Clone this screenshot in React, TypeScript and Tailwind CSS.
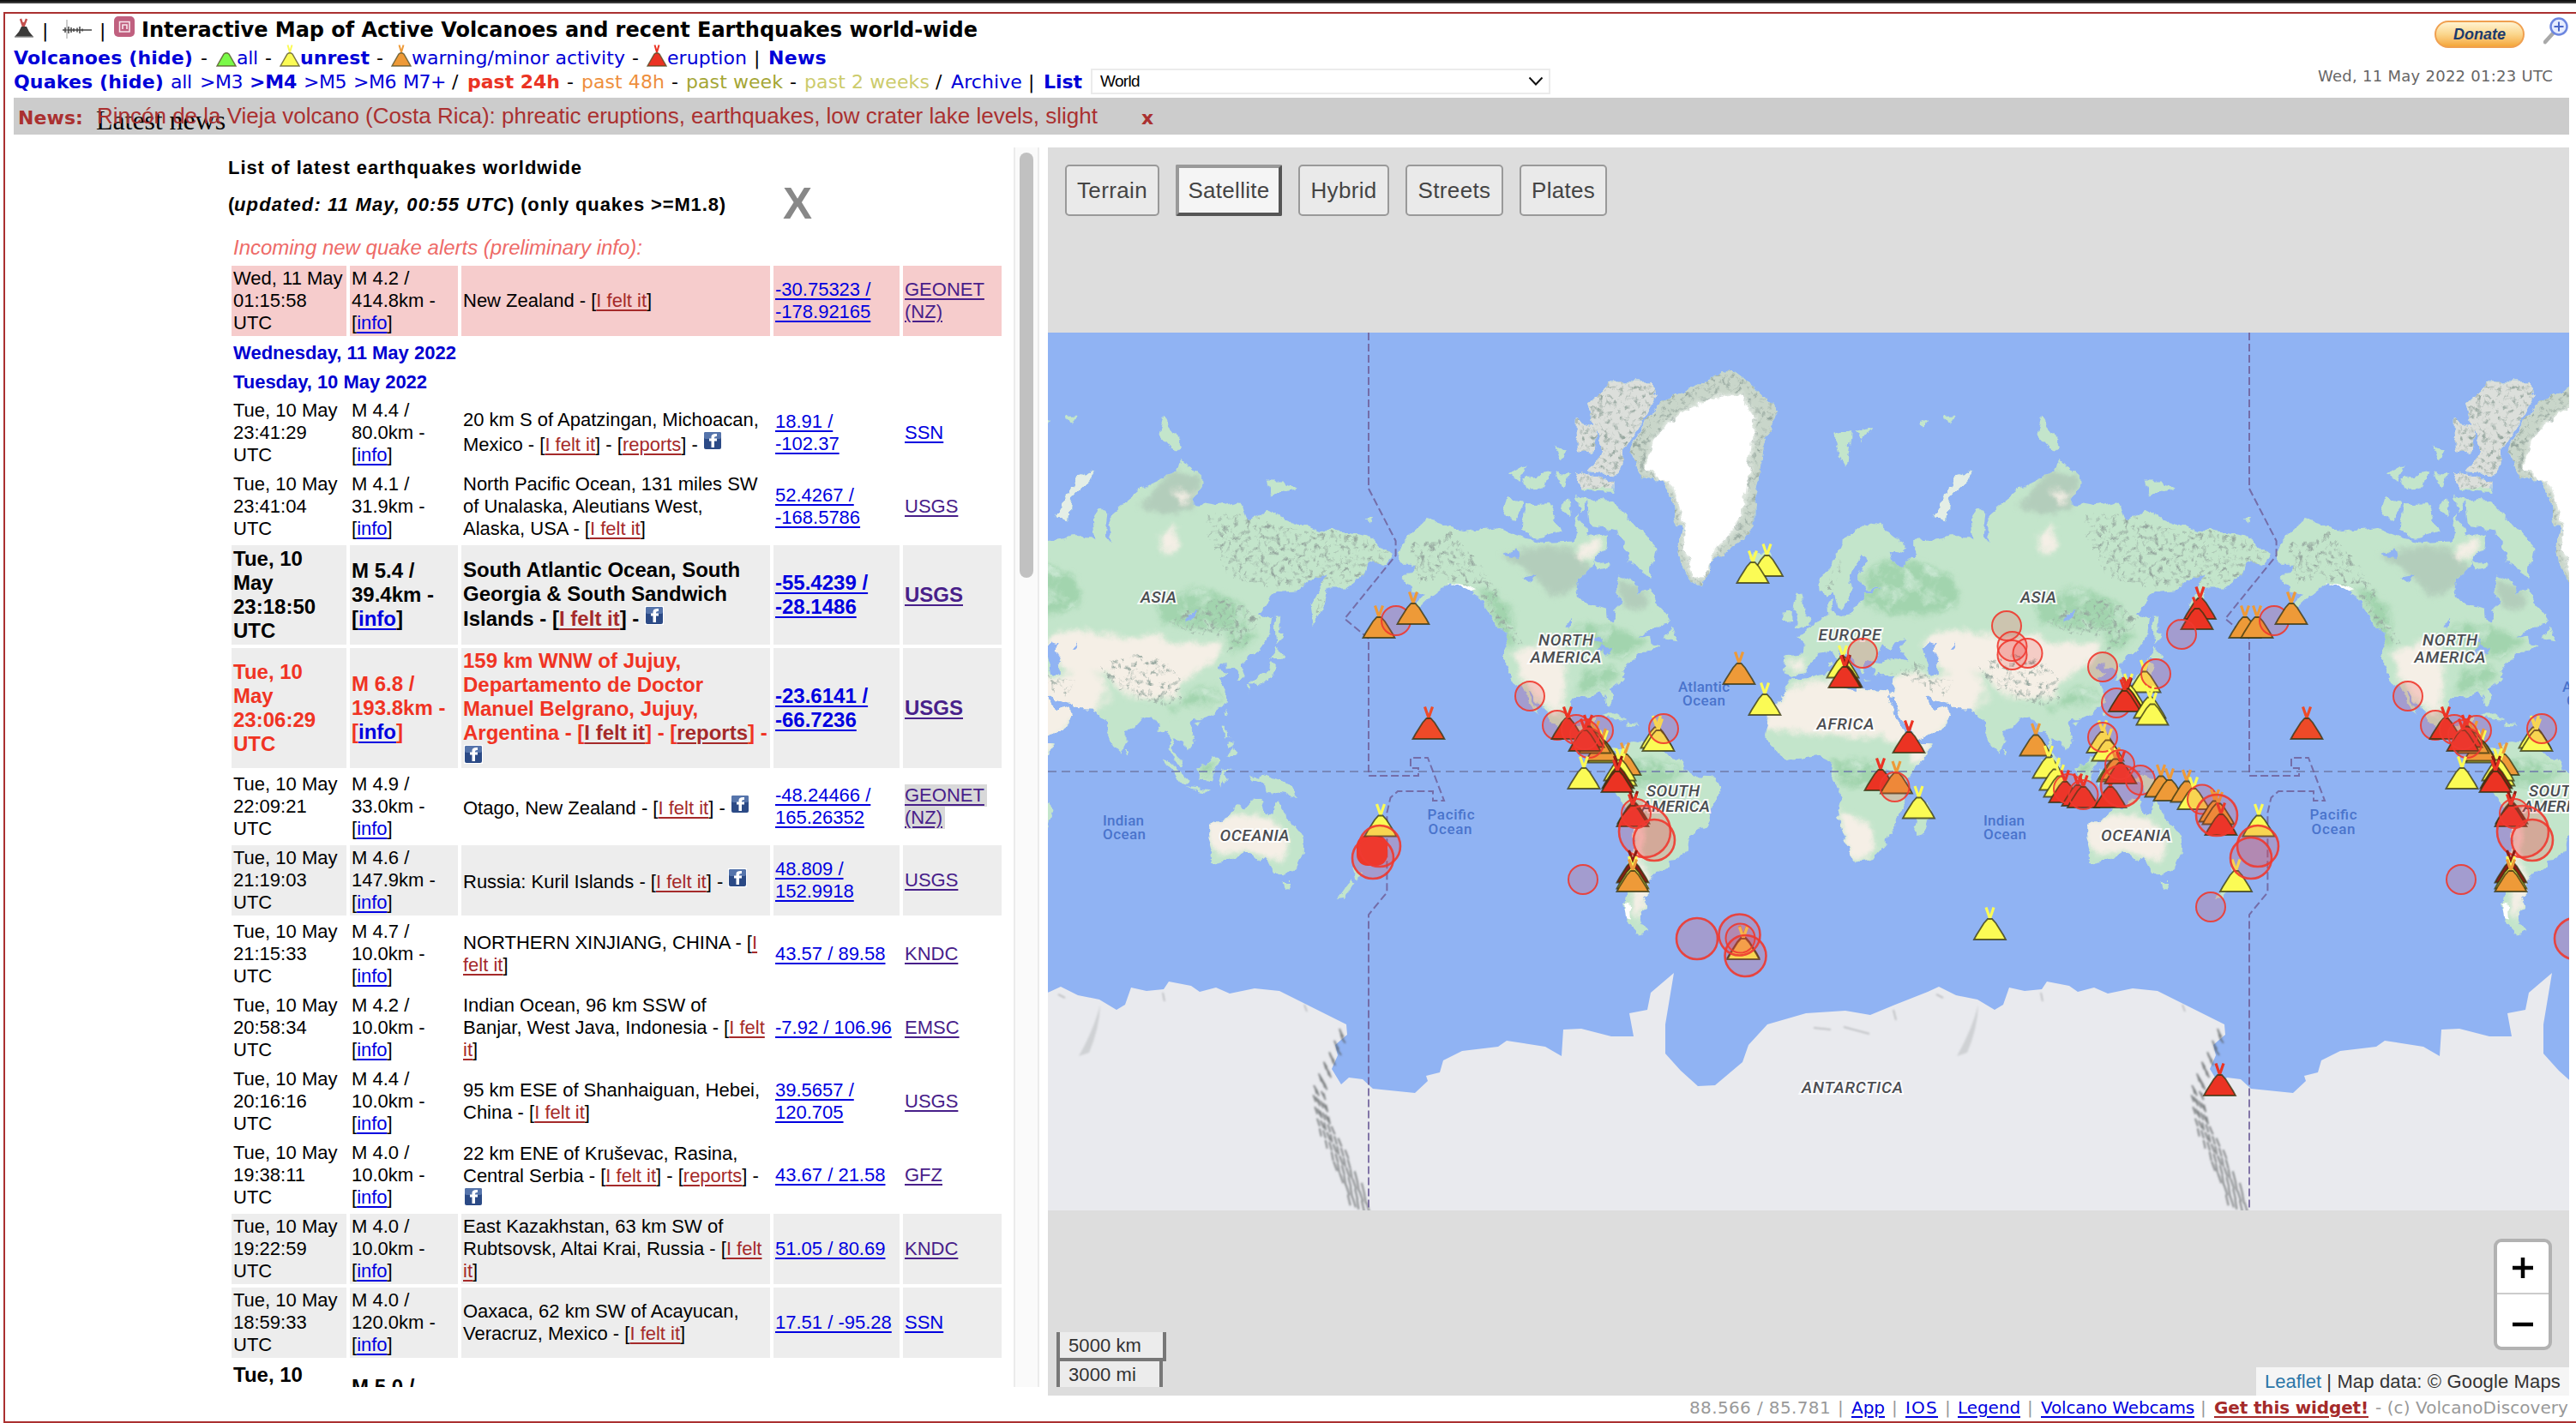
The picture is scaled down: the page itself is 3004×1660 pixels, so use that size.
import React, { useLayoutEffect, useRef, useState } from "react";

/* ---------- text helper: tracks a run of text out to a given width ---------- */

function Fit({ w, className = "", children }: { w: number; className?: string; children: string }) {
  const ref = useRef<HTMLSpanElement>(null);
  const [ls, setLs] = useState(0);
  useLayoutEffect(() => {
    if (ref.current) {
      const natural = ref.current.getBoundingClientRect().width;
      setLs((w - natural) / children.length);
    }
  }, []);
  return (
    <span ref={ref} className={"inline-block shrink-0 whitespace-pre " + className} style={{ letterSpacing: ls + "px" }}>
      {children}
    </span>
  );
}

/* ---------- icons ---------- */

function VolcanoIcon({ fill, plume, className = "" }: { fill: string; plume?: string; className?: string }) {
  return (
    <svg viewBox="0 0 24 26" className={"h-[26px] w-6 shrink-0 " + className}>
      {plume && <path d="M9.5 0.5L12 9M14.5 0.5L12 9" stroke={plume} strokeWidth="2" fill="none" />}
      <path d="M1 25L9 11Q12 8.5 15 11L23 25Z" fill={fill} stroke="#4d4a20" strokeOpacity=".75" strokeWidth="1.5" />
    </svg>
  );
}

function DarkVolcano() {
  return (
    <svg viewBox="0 0 24 24" className="h-6 w-6 shrink-0">
      <path d="M8 1l3 9M15 1l-3.500 9M11 5v6" stroke="#c4504e" strokeWidth="2.400" fill="none" />
      <path d="M1 22l5-6 3-6h6l3 6 5 6z" fill="#3b3a39" />
      <path d="M1 22h22" stroke="#8a8a8a" strokeWidth="1.500" />
    </svg>
  );
}

function Seismo() {
  return (
    <svg viewBox="0 0 34 26" className="h-[26px] w-[34px] shrink-0">
      <path d="M0 13h34" stroke="#444" strokeWidth="1.600" />
      <path d="M5 1v22" stroke="#999" strokeWidth="1" />
      <path d="M3 10v6M7 9v8M10 10v6M13 11v4M17 10.500v5M20 9v8M23 11.500v3" stroke="#444" strokeWidth="1.500" />
    </svg>
  );
}

function PinkBox() {
  return (
    <svg viewBox="0 0 24 24" className="h-6 w-6 shrink-0">
      <rect width="24" height="24" rx="5" fill="#c0607f" />
      <path d="M6.500 6.500h11.500v11.500h-11.500z" fill="none" stroke="#f8e8ee" strokeWidth="1.500" />
      <path d="M10 15v-5h5v5" fill="none" stroke="#f8e8ee" strokeWidth="1.600" />
    </svg>
  );
}

function Facebook() {
  return (
    <svg viewBox="0 0 22 22" className="inline-block h-[22px] w-[22px] align-[1px]">
      <rect width="22" height="22" fill="#fff" />
      <rect x="1" y="1" width="20" height="20" rx="2" fill="#2b4a86" />
      <rect x="1" y="1" width="20" height="8" rx="2" fill="#5574ab" />
      <path d="M9.500 19v-7.500h-2.500v-3h2.500v-2q0-4 6.500-3.500v3q-3-.3-3 1.500v1h3v3h-3V19z" fill="#fff" />
    </svg>
  );
}

function Magnifier() {
  return (
    <svg viewBox="0 0 30 32" className="h-8 w-[30px] shrink-0">
      <path d="M11 19L2 29" stroke="#a9a9a9" strokeWidth="4.500" strokeLinecap="round" />
      <circle cx="18" cy="11" r="9.500" fill="#e6ecff" stroke="#6c86e0" strokeWidth="2.500" />
      <path d="M18 5.500v11M12.500 11h11" stroke="#4b66c8" strokeWidth="2" />
    </svg>
  );
}

/* ---------- world geometry (lon,lat rings) ---------- */

const LAND: string[] = [
  // Eurasia
  "-9,37 -9.5,39 -9,43 -2,43.5 -1.2,46 -4.5,48.3 -1.5,49 2,51 5,53 8.5,54 8,57 10.5,57.5 10,55 11,54 14,54 19,54.5 21,57 24,57.5 23.5,59 30,60 24,60 21.5,61 21.5,63 25,65 22,66 17.5,62.5 17,60.5 19,60 16.5,57 14,55.5 12.5,56 11,59 8,58 5.5,59 5,62 10,64 14,68 20,70 26,71 31,70.3 41,67.5 40,66.2 34,66.7 35,64.5 38,64 40,65 44,66 44,68.3 53,68.5 59,69 66,69 68,68.5 67,71 70,73 73,72.5 72,69 74,68 74,72 80,73.5 87,75 98,76.3 104,77.7 113,75.8 108,73.5 118,73 127,73.5 130,71 139,72.5 150,71 160,69.8 170,69.5 180,69 187,67 190,66 187,64.3 180,65 178,62.5 171,60 163,60 162,56 157,51.2 156,56 160,60 163,62.5 156,61.5 151,59.3 142,59 135,54.5 141,53 140,48.5 135,44 131,42.7 127.5,39.5 129.3,36 126.5,34.5 126.5,37.5 125,39.5 121.5,39 121.5,40.8 118,39 122.5,37.3 119.3,35 121.9,31.5 121.5,28 118,24.5 114,22.3 110,20.5 108.5,21.7 106,20 107,17 109.2,12.5 106.5,9 105,9 104.5,10.5 102.5,12 101,13.5 100,13.3 99.3,9.5 100.5,7 103.3,4.5 104,1.3 103,1.5 100.5,5 98.3,8.5 98.5,13 97.5,16.5 94.5,16 94,19 91.5,22.5 87,21.5 82.5,16.8 80,15.5 80,12 78,8.2 76.3,10 73,16 72.7,21 70,20.8 69,22.5 67,25 61,25.2 57,26.8 51.5,27.8 50,30 48,29.8 50.3,26.5 51.5,25.5 52,24 56,26 59.8,22.5 55,17.5 52,15.7 45,12.8 43.3,12.7 42.8,16.5 39,21.3 35,28 35,29.5 32.5,29.9 34.3,31.3 36,36.7 30.5,36.5 27.5,37 26.5,39.5 29,41 35,42 41.3,41.4 38,44.5 39.5,47.2 35,46.3 33.5,44.5 31,46.5 28.7,44 28,41.3 24,40.7 22.7,39 23.7,38 22.7,36.7 20,39.7 19.3,42 13.7,45 12.5,45.4 14,42.5 18.4,40 16.5,39.8 17,38.8 16,38 15.7,40 12,42 10.3,43.8 7,43.7 4,43.4 3,41.8 0,39.5 -1,37.5 -4.5,36.7 -6,36.3",
  // Africa
  "-6,35.8 -2,35.1 5,36.8 10.5,37.3 11,34 15,32.3 20,31 20,32.8 25,31.7 32,31.2 32.5,29.8 34,27 37,21 39.5,15.5 43,11.8 51,11.9 48,5 42,-1.5 39.3,-6 40.7,-14.5 35,-20 35.5,-24 32.8,-26 32.5,-28.5 28,-33 20,-34.8 18.3,-33 15,-26.5 12,-18 13.7,-11 12,-5.5 9,-1 9.7,3.8 4.5,6.3 -4,5.2 -8,4.4 -13.3,8.8 -16.8,12.5 -17.2,15 -16.2,19 -17,21 -13,27.5 -9.8,30 -9,33",
  "49.3,-12 50.4,-15.7 47.5,-24.8 45,-25.5 43.5,-22 44.5,-16.5",
  // North America
  "-168,65.7 -166,68.3 -156.5,71.3 -141,69.7 -128,70.2 -115,68.5 -108,68 -96,68.2 -94,72 -90,69 -82,69.5 -82,67 -87,66 -87,64.5 -94,61.5 -94.5,58.8 -92.5,57 -82.3,55.2 -82,52.9 -79.5,51.5 -79,54.5 -76.8,57 -78,60 -77.5,62.5 -71,61.2 -69,58.8 -65,60.2 -62,57.5 -57,53 -60,50.2 -66,50 -69,48 -65,48.5 -64.5,46.5 -60,46 -66,43.7 -70,43.5 -70.2,41.8 -74,40.5 -76,37 -75.7,35.3 -81.2,31.5 -80,26.5 -81,25.3 -83,29 -85.5,30 -90,29.3 -94,29.6 -97.3,27.5 -97.8,22.5 -95.5,18.7 -91.5,18.5 -90.3,21 -87,21.4 -88.5,16 -83.3,15 -83.5,11 -81.5,9 -79.5,9.4 -77.3,8.3 -78.3,8.3 -80,7.3 -83,8.3 -86,11.5 -91.5,14 -94.5,16.2 -96.5,15.7 -105.5,20 -105.5,22.5 -109.5,26 -113,31 -114.7,31.5 -111.5,26.5 -109.5,23 -112,25 -115,28.5 -117.2,32.6 -120.7,34.6 -124,40 -124.3,47 -123,49 -128,51.5 -131,55 -135,58.3 -140,59.8 -147,61 -151.5,59.3 -153.5,58.5 -158.5,56 -164.5,54.7 -158,58.5 -162,58.8 -162,60 -166,61.5 -161,64.5 -166,64.5",
  // South America
  "-77.3,8.3 -75.5,10.7 -71.7,12.2 -68,11.2 -62,10.7 -57,6 -51,4.2 -50,0.5 -44,-2.6 -39,-3 -35.2,-5.5 -35,-8.5 -39,-13.5 -39.5,-18.5 -41,-22 -44.5,-23.2 -48.5,-26 -49,-28.8 -53.5,-34 -57.5,-34.3 -57,-36.5 -62,-39 -65,-41 -65.5,-45 -67.5,-46.3 -66,-48 -69,-51 -68.3,-52.5 -65.5,-54.8 -69,-55.5 -74,-52.5 -75.5,-48 -73.5,-42 -73.5,-37 -71.5,-31 -70.3,-20 -71,-17.7 -76,-14 -79,-8 -81.3,-5.5 -80,-3 -80.8,-1 -78.5,2 -77.3,4",
  // Greenland
  "-73,78.3 -68,80.2 -60,82 -45,82.8 -32,83.6 -20,82.5 -12,81.5 -18,79 -19.5,76 -22,73 -22,70.5 -27,68.5 -34,66.3 -40,65 -43,60.2 -48.5,61.3 -52,64.5 -53.5,67.5 -51,69.5 -54.5,71 -56,74 -60,76 -68,76",
  // Arctic Canada
  "-90,73.7 -80,73.7 -72,71 -62,66.8 -65,62 -68,63 -73,64.5 -74,66.5 -78,70 -89,70.5",
  "-117,71 -115,73.2 -106,73.3 -101,69.5 -110,68.6 -117,69.8",
  "-125,72 -123,74.3 -116,73.2 -120,71.3",
  "-90,76.5 -84,78.5 -88,80.5 -90,81.8 -80,83 -65,83 -62,82.2 -68,80.5 -75,78.5 -78,76.3",
  "-95,80.8 -87,80.3 -88,78.3 -95,78.5",
  "-96,76.6 -80,75.8 -80,74.6 -92,74.8",
  "-117,76 -106,76.5 -108,75 -115,74.9",
  "-102,73 -98,74 -97,71.5",
  "-95,74 -90,73.7 -93,72.2",
  "-104,79 -99,78.5 -101,77.8",
  "-104,76.5 -98,76.5 -100,75",
  "-122,76.5 -116,77.3 -118,75.8",
  "-87,65.5 -81,64 -86,63.3",
  // North Atlantic and Europe
  "-59,47.7 -56,51.5 -53,47",
  "-24,65.5 -22,66.3 -16,66.5 -13.7,65 -18,63.4 -22.5,64",
  "-5.5,50 1.3,51.2 -1.5,55 -2,57.5 -5,58.6 -6,56 -3.3,54",
  "-10,52 -6.3,52.3 -6,54.8 -8.5,55.2 -10,54",
  "11,79.7 18,80 16,77 13,78",
  "19,80 27,80.3 22,79.3",
  "51.5,71.5 55,73.5 60,76 68,77 66,76 58,74 57,71",
  "46,80.6 50,80.8 48,80.2",
  "56,81 60,81 58,80.4",
  "96,81.1 99,80 104,79 101,78.3 94,79.8",
  "138,75.8 145,75.8 150,75 140,74",
  "178.5,71.4 181.5,71.4 180,70.9",
  "8.3,41 9.7,41 9.3,39 8.500,39",
  "12.5,38 15.5,38 15,36.8",
  "23.5,35.5 26.3,35.2 24.7,34.9",
  // East Asia and islands
  "142,54 143.5,53 143,49.5 144.5,49 142.5,46.2 142,50",
  "140,42 141.8,45.4 145.3,43.3 143,42",
  "140.3,41 142,39.5 140.8,35.6 135.7,33.6 131,34 133,35.5 137,37 139.5,38.5",
  "130,33.5 131.8,33.3 131,31.2",
  "120.2,23 121.5,25.2 121,22",
  "108.700,19.300 110.700,20 110,18.300",
  "120.5,18.5 122,18.3 121.7,14 124,12.8 120.5,14",
  "122,7 125.5,9.5 126.3,7 125,6",
  "122,11.5 125,12 125,10 122.5,9.5",
  "109,1.5 113,3.2 117,7 119,5 117.5,1 116,-4 110.5,-3",
  "95.3,5.6 98,4 103.5,-1 106,-3.2 105.5,-5.8 102,-4 98.5,1.5",
  "105.3,-6.8 108,-6.8 114.5,-7.8 114,-8.7 108,-7.8",
  "119,-3 120,0.8 124.5,1.3 121,0 122,-4.500 120.5,-3 120,-5.5",
  "131,-0.8 135,-3.3 138,-1.6 144,-3.8 147.8,-6 150.5,-10.5 147,-9.6 143,-9 138,-8.3 137.5,-5.2 132.5,-4",
  "80,9.5 81.7,7.5 80.5,6",
  // Oceania
  "114,-22 114,-26 115.7,-32 115,-34.3 118,-35 123.5,-34 129,-31.7 132,-32 135.5,-34.8 137.8,-33 139.5,-36 141,-38.2 146.3,-39 150,-37.5 153.2,-31.5 153.3,-26 149,-20.8 146,-19 145.3,-15 142.5,-10.8 141.5,-13 140.8,-17.5 139,-17.3 135.7,-15 136.8,-12.2 132.5,-11.3 129.5,-15 126,-14 122.3,-18",
  "145,-41 148.2,-41 147,-43.500 146,-43.300",
  "172.8,-34.5 175,-37 178,-37.7 175.3,-41.5 174.7,-39",
  "172.7,-40.6 174.2,-41.8 170.5,-46 167,-46.3",
  // Caribbean
  "-85,22 -80,23 -74.3,20.2 -78,20.7",
  "-74,19.8 -68.5,18.8 -74,18.2",
];

const ARCTIC_CANADA_ROCK = "-97,75 -97,81 -90,82 -80,83.3 -60,83.3 -62,81 -72,77 -76,75";
const GREENLAND_ICE = "-67,77 -63,79.500 -52,81.200 -40,82 -28,82.3 -22,81 -24,77 -26,73 -30,70 -38,67 -43,62 -47,62.500 -50,67 -51,71 -55,75 -62,76.500";

const DESERTS = [
  // Sahara and Arabia
  "-18,17 -17,23 -10,31 0,34.5 10,35 20,33 33,32 36,36 45,38 50,36 62,38 70,37 74,30 68,24 58,20 52,14 43,10 30,14 10,14.5",
  // Central Asia and Gobi
  "47,46 52,50 62,50 70,49 80,48 86,48 92,49.500 100,46 108,47 114,46.500 121,47 118,42 108,37 103,34 102,29 92,28.500 84,28.500 76,33 72,38 60,37 54,39",
  "72,26 75,30 71,31 69,26",
  // Southern Africa
  "12,-16 20,-18 26,-22 28,-30 22,-34 17,-33",
  "43,12 51,12 47,3 42,3",
  // Western US and Mexico
  "-120,44 -112,46 -106,48 -101,46 -99,36 -100,28 -103,22 -108,26 -114,32 -118,36",
  // Australia
  "113,-21 122,-18 130,-17 138,-18.500 144,-22 147,-28 145,-34 140,-34 135,-32 128,-31 118,-32 114,-28",
  // Andes and Patagonia
  "-71,-16 -67,-18 -67,-28 -68,-36 -64,-40 -64,-44 -67,-48 -70,-52 -72,-50 -70.500,-40 -71,-30 -71,-20",
  "-10,41 -2,42 -1,38 -5,38",
  "94,69 101,70.500 102,67 96,66",
  "99,75 108,74 110,75 104,73",
  "-95,66.500 -86,69 -84,67 -93,65",
];

const FORESTS = [
  "22,62 30,65 45,65 60,62 62,56 50,54 34,54 24,56",
  "92,57 110,60 125,58 130,52 120,50 104,51 96,52",
  "-135,60 -128,59 -120,54 -122,44 -127,50",
  "-98,50 -90,52 -75,50 -66,47 -76,42 -92,46",
  "-92,38 -80,40 -77,37 -84,31 -95,31",
  "100,22 98,26 106,26 114,26 120,29 116,33 108,32 104,28",
  "124,43 134,48 130,52 122,50",
  "-76,5 -60,5 -50,0 -60,-6 -74,-6",
  "9,5 30,4 30,-6 14,-6",
  "110,2 117,5 116,-2 111,-2",
];

const TUNDRA = [
  "-125,66 -110,67.500 -96,67 -88,63 -94,60 -104,58 -112,62",
  "-78,62 -66,59 -66,55 -76,56",
  "86,73 100,77 112,76 108,72.500 96,72",
];

const MOUNTAINS = [
  "112,72 130,72 150,70 176,69 189,66.500 178,62 160,60 150,60 138,60 122,62",
  "-163,68 -145,69.500 -138,66 -130,62 -124,54 -117,46 -122,46 -128,53 -136,60 -150,62 -160,60",
  "70,40 78,42 90,43 98,40 104,34 103,27 96,26 85,28 76,33 72,36",
  "98,52 110,56 120,58 132,54 125,48 108,49",
  "122,44 130,46 136,54 130,54",
  "34,38 46,41 52,36 60,35 56,29 46,34",
  "6,60 14,66 12,60",
  "158,52 163,58 159,58",
];

const LAKES = [
  "47,45 50,46.7 53,46 51,44.5 53,42 53,37 49.5,37.5 49,40.5 47.5,43",
  "104,51.5 109.5,55.5 109,53",
  "58.5,44.500 61,46.500 60,44.300",
  "-92,47 -85,48.500 -84,46.500 -88,47",
  "-88,42 -85,46 -80,45.500 -83,42.500 -84,45 -87,42",
  "-125,66 -119,67 -118,65.500",
  "-117,62 -110,62.500 -114,61",
  "-99,51 -97,53.500 -97,51",
  "32,1 34,0 33,-2.500",
];

const R = 1024 / (2 * Math.PI);
function ring(s: string): string {
  return (
    "M" +
    s
      .split(" ")
      .map((p) => {
        const [lon, lat] = p.split(",").map(Number);
        const x = 1596 + ((lon + 180) / 360) * 1024;
        const y = 900 - R * Math.log(Math.tan(Math.PI / 4 + (lat * Math.PI) / 360));
        return x.toFixed(1) + " " + y.toFixed(1);
      })
      .join("L") +
    "Z"
  );
}
const rings = (a: string[]) => a.map(ring).join("");

const ANTARCTICA =
  "M2000 1266L2032 1239 2039 1219 2061 1195 2106 1182 2152 1179 2181 1184 2210 1172 2248 1157 2261 1151 2281 1161 2306 1166 2326 1178 2336 1172 2343 1152 2361 1156 2381 1154 2387 1145 2413 1150 2423 1157 2442 1152 2458 1159 2487 1153 2516 1156 2548 1172 2568 1182 2594 1195 2595 1207 2581 1219 2584 1231 2577 1247 2588 1265 2597 1257 2613 1259 2625 1270 2674 1275 2689 1261 2687 1255 2703 1251 2707 1237 2729 1226 2771 1221 2781 1214 2826 1221 2845 1232 2847 1201 2868 1200 2903 1209 2929 1209 2924 1182 2945 1178 2949 1158 2976 1135 2966 1195 2966 1229 2984 1249 3004 1267 3024 1266V1412H2000Z";

const DATELINE =
  "M1596 388V570L1627.600 631V648L1568 721.700 1596 745V905H1654V896H1645V884H1665L1684 934H1671V923H1630L1621.500 930.500 1617.400 948V1041L1596 1067V1412";

/* Ridge shading along the Transantarctic range */
const RIDGE = Array.from({ length: 90 }, (_, i) => {
  const t = i / 90;
  const cx = t < 0.35 ? 2590 - t * 90 : t < 0.5 ? 2562 + (t - 0.35) * 20 : 2565 + (t - 0.5) * 95;
  const j = ((i * 37) % 17) - 8;
  const x = cx + j * (0.5 + t);
  const y = 1200 + t * 205;
  return "M" + x.toFixed(1) + " " + y.toFixed(1) + "l" + (2 + (i % 3)) + " " + (5 + t * 8).toFixed(1);
}).join("");

/* ---------- markers ---------- */

type Kind = "r" | "o" | "y" | "d" | "v";
type Item = [Kind, number, number] | ["c", number, number, number] | ["s", number, number];
const PAL: Record<string, string> = { r: "#eb3323", o: "#ee9a38", y: "#fbfb55", d: "#8a1c14", v: "#ee4a28" };

/* Pacific and Americas: shown again one world to the east */
const WEST: Item[] = [
  ["o", 1608, 745.500], ["c", 1628, 724, 17], ["o", 1648, 729.500], ["v", 1666, 863.500],
  ["y", 1610, 977], ["c", 1609, 987, 24], ["c", 1601, 1001, 24],
  ["c", 1784, 812, 17], ["c", 1816, 846, 17], ["r", 1828, 863.500], ["c", 1838, 851, 17], ["c", 1864, 852, 17],
  ["y", 1870, 891], ["o", 1868, 889], ["o", 1860, 880], ["r", 1852, 873], ["r", 1848, 877.500], ["c", 1848, 857, 17], ["c", 1853, 867, 17],
  ["y", 1932, 874], ["y", 1934, 877.500], ["c", 1940, 850, 17],
  ["o", 1895, 905.500], ["y", 1890, 918], ["y", 1889, 912], ["y", 1847, 921.500], ["d", 1887, 921], ["r", 1886, 925.500],
  ["d", 1905, 962], ["r", 1904, 965.500], ["c", 1908, 949, 17], ["c", 1918, 970, 30], ["c", 1929, 980, 24],
  ["d", 1904, 1031], ["y", 1904, 1038], ["o", 1904, 1041.500], ["c", 1846, 1026, 17], ["c", 1979, 1095, 24],
];

const REST: Item[] = [
  ["s", 1600, 992],
  ["o", 2028, 799.500], ["y", 2060.500, 673.500], ["y", 2044, 681.500], ["y", 2058, 835.500],
  ["y", 2149, 792], ["d", 2153, 803], ["r", 2151, 803.500], ["c", 2172, 762, 17],
  ["c", 2340, 730, 17], ["c", 2346.500, 754, 17], ["c", 2346.500, 764, 17], ["c", 2364.500, 762, 17],
  ["r", 2565.500, 723.500], ["r", 2562, 735.500], ["c", 2544, 740, 17], ["o", 2618, 745.500],
  ["c", 2452, 778, 17], ["y", 2501, 809], ["c", 2514, 786, 17],
  ["c", 2468, 820, 17], ["y", 2482, 825], ["d", 2481, 830], ["r", 2480, 829], ["r", 2477.500, 831.500],
  ["y", 2507, 839], ["y", 2510, 847],
  ["y", 2452, 879.500], ["y", 2458, 889], ["c", 2452, 860, 17],
  ["o", 2374, 883], ["y", 2389, 909], ["y", 2397, 923], ["y", 2402, 931],
  ["r", 2408, 937.500], ["r", 2423, 941.500], ["c", 2412, 920, 17], ["r", 2429.500, 943.500], ["c", 2429.500, 927, 17],
  ["r", 2461, 943.500], ["y", 2464, 913], ["o", 2467, 911], ["r", 2473, 915.500], ["c", 2472, 892, 17], ["c", 2474, 917, 24], ["c", 2496, 910, 17],
  ["o", 2520, 931], ["o", 2530, 935.500], ["o", 2550, 937], ["y", 2558, 945.500], ["c", 2568, 932.500, 17],
  ["o", 2583, 960], ["o", 2587, 963], ["r", 2590, 975.500], ["c", 2585, 951, 24],
  ["y", 2607.500, 1041.500], ["c", 2578, 1058, 17],
  ["r", 2226, 879.500], ["r", 2193, 923.500], ["o", 2211.500, 927], ["c", 2209.500, 918, 17], ["y", 2237.500, 956],
  ["y", 2320.500, 1097.500], ["r", 2588.500, 1279.500],
  ["o", 2033, 1119], ["y", 2033, 1120.500], ["c", 2028.500, 1090.500, 24], ["c", 2029.500, 1094.500, 17], ["c", 2035.500, 1115, 24],
];

function Markers({ items, dx = 0 }: { items: Item[]; dx?: number }) {
  return (
    <g transform={`translate(${dx} 0)`}>
      {items.map((it, i) => {
        const [k, x, y] = it;
        if (k === "c")
          return <circle key={i} cx={x} cy={y} r={it[3]} fill="#f04040" fillOpacity=".2" stroke="#f0392e" strokeOpacity=".9" strokeWidth={(it[3] as number) > 20 ? 2.6 : 2} />;
        if (k === "s") return <rect key={i} x={x - 18} y={y - 18} width="36" height="36" rx="13" fill="#ee3524" />;
        return (
          <g key={i} transform={`translate(${x - 20} ${y - 40})`}>
            <path d="M15.500 1L20 14M24.500 1L20 14" stroke={PAL[k]} strokeWidth="3.200" fill="none" />
            <path d="M1.500 38.500L4.500 33 13 19.500 17.500 14.500h5L27 19.500 35.500 33 38.500 38.500z" fill={PAL[k]} stroke="#33330f" strokeOpacity=".75" strokeWidth="1.800" />
          </g>
        );
      })}
    </g>
  );
}

const LABELS: [string, number, number, number][] = [
  ["ASIA", 1351, 696, 42], ["ASIA", 2377, 696, 42],
  ["NORTH", 1826, 746, 64], ["AMERICA", 1826, 766, 83], ["NORTH", 2857, 746, 64], ["AMERICA", 2857, 766, 83],
  ["SOUTH", 1951, 922, 62], ["AMERICA", 1954, 940, 80], ["SOUTH", 2980, 922, 62], ["AMERICA", 2982, 940, 80],
  ["AFRICA", 2152, 844, 67], ["EUROPE", 2157, 740, 73],
  ["OCEANIA", 1463, 974, 81], ["OCEANIA", 2491, 974, 82], ["ANTARCTICA", 2160, 1268, 118],
];
const SEAS: [string, number, number, number][] = [
  ["Indian", 1310, 957, 48], ["Ocean", 1311, 973, 50], ["Indian", 2337, 957, 48], ["Ocean", 2338, 973, 50],
  ["Pacific", 1692, 950, 55], ["Ocean", 1691, 967, 51], ["Pacific", 2721, 950, 55], ["Ocean", 2721, 967, 51],
  ["Atlantic", 1987, 801, 60], ["Ocean", 1987, 817, 50], ["Atlantic", 3018, 801, 60], ["Ocean", 3018, 817, 50],
];

function WorldMap() {
  return (
    <svg viewBox="1222 388 1774 1024" className="block h-[1024px] w-[1774px] shrink-0 bg-[#90b3f3]">
      <defs>
        <filter id="rough" x="1590" y="388" width="1080" height="760" filterUnits="userSpaceOnUse">
          <feTurbulence type="fractalNoise" baseFrequency="0.07" numOctaves="4" seed="4" result="n" />
          <feDisplacementMap in="SourceGraphic" in2="n" scale="11" xChannelSelector="R" yChannelSelector="G" />
          <feGaussianBlur stdDeviation="0.5" />
        </filter>
        <filter id="relief" x="1590" y="388" width="1080" height="760" filterUnits="userSpaceOnUse">
          <feTurbulence type="fractalNoise" baseFrequency="0.16" numOctaves="3" seed="9" result="n" />
          <feColorMatrix in="n" type="matrix" values="0 0 0 0 .30  0 0 0 0 .38  0 0 0 0 .34  3.4 0 0 0 -1.75" result="s" />
          <feComposite in="s" in2="SourceGraphic" operator="in" />
        </filter>
        <filter id="grain" x="1590" y="388" width="1080" height="760" filterUnits="userSpaceOnUse">
          <feTurbulence type="fractalNoise" baseFrequency="0.05" numOctaves="4" seed="21" result="n" />
          <feColorMatrix in="n" type="matrix" values="0 0 0 0 .58  0 0 0 0 .80  0 0 0 0 .64  2.6 0 0 0 -1.2" result="s" />
          <feComposite in="s" in2="SourceGraphic" operator="in" />
        </filter>
        <filter id="soft" x="1590" y="388" width="1080" height="760" filterUnits="userSpaceOnUse">
          <feGaussianBlur stdDeviation="3" />
        </filter>
        <filter id="ridge" x="-20%" y="-5%" width="140%" height="110%">
          <feGaussianBlur stdDeviation="0.9" />
        </filter>
        <clipPath id="landclip">
          <path d={rings(LAND)} />
        </clipPath>
        <g id="world">
          <g filter="url(#rough)">
            <path d={rings(LAND)} fill="#c3e5cb" />
            <g clipPath="url(#landclip)">
              <g filter="url(#soft)">
                <path d={rings(FORESTS)} fill="#a2d4ae" />
                <path d={rings(TUNDRA)} fill="#b3cdbb" />
                <path d={rings(DESERTS)} fill="#f5efe6" />
              </g>
              <path d={rings(FORESTS)} fill="#a2d4ae" filter="url(#grain)" />
              <path d={rings([ARCTIC_CANADA_ROCK])} fill="#dcdfdb" />
              <path d={ring(LAND[5])} fill="#c9d6ca" />
              <path d={rings(MOUNTAINS.concat([ARCTIC_CANADA_ROCK]))} fill="#000" filter="url(#relief)" />
              <path d={ring(LAND[5])} fill="#000" filter="url(#relief)" />
              <path d={ring(GREENLAND_ICE)} fill="#ffffff" filter="url(#soft)" />
              <path d={ring(GREENLAND_ICE)} fill="#ffffff" />
              <path d={ring("51.5,71.5 55,73.5 60,76 68,77 66,76 58,74 57,71")} fill="#e4eee6" />
              <path d={ring("-148,61 -140,60.500 -136,59.500 -140,59 -146,60")} fill="#fff" />
              <path d={ring("-75,-47 -73,-47 -72.500,-52 -75,-51")} fill="#fff" />
            </g>
            <path d={rings(LAKES)} fill="#90b3f3" />
          </g>
        </g>
        <g id="southpole">
          <path d={ANTARCTICA} fill="#e9eaee" />
          <path d="M2307 1172Q2300 1200 2282 1232L2294 1228Q2306 1200 2307 1172Z" fill="#cfd1d4" filter="url(#ridge)" />
          <path d="M2258 1160l8 4M2115 1199l20 2M2150 1198l30 8M2208 1178l3 12M2545 1172l3 8M2380 1158l2 10" stroke="#b5b7ba" strokeWidth="1.500" filter="url(#ridge)" />
          <path d={RIDGE} stroke="#54585a" strokeWidth="1.800" strokeOpacity=".75" filter="url(#ridge)" />
        </g>
      </defs>
      <use href="#world" x="-1024" />
      <use href="#world" />
      <use href="#world" x="1024" />
      <use href="#southpole" x="-1024" />
      <use href="#southpole" />
      <path d="M1222 900H2996" stroke="#707cab" strokeOpacity=".8" strokeWidth="2" strokeDasharray="10 6" />
      <path d={DATELINE} fill="none" stroke="#70609a" strokeWidth="2" strokeDasharray="9 4" strokeOpacity=".85" />
      <path d={DATELINE} transform="translate(1027 0)" fill="none" stroke="#70609a" strokeWidth="2" strokeDasharray="9 4" strokeOpacity=".85" />
      <g textAnchor="middle" fontFamily="Roboto, sans-serif" fontSize="19">
        {LABELS.map(([t, x, y, w], i) => (
          <text key={i} x={x} y={y + 7} textLength={w} fontStyle="italic" fontWeight="500" fill="#4b4d52" stroke="#fff" strokeOpacity=".85" strokeWidth="4" paintOrder="stroke">
            {t}
          </text>
        ))}
        {SEAS.map(([t, x, y, w], i) => (
          <text key={i} x={x} y={y + 6} textLength={w} fontSize="17" fontWeight="500" fill="#4a74cc">
            {t}
          </text>
        ))}
      </g>
      <Markers items={REST} />
      <Markers items={WEST} />
      <Markers items={WEST} dx={1024} />
    </svg>
  );
}

/* ---------- quake list ---------- */

const Felt = () => <>[<span className="text-[#a52a2a] underline decoration-2 underline-offset-[3px]">I felt it</span>]</>;
const Reports = () => <>[<span className="text-[#a52a2a] underline decoration-2 underline-offset-[3px]">reports</span>]</>;

type Row = {
  h: string;
  bg?: string;
  bold?: boolean;
  red?: boolean;
  time: string[];
  mag: string[];
  place: React.ReactNode;
  coord: string[];
  src: string[];
  newSrc?: boolean;
  marked?: boolean;
};

const G = "bg-[#ededed]";
const H82 = "h-[82px]";
const ROWS: Row[] = [
  { h: H82, time: ["Tue, 10 May", "23:41:29", "UTC"], mag: ["M 4.4 /", "80.0km -"], place: <>20 km S of Apatzingan, Michoacan,<div className="leading-[30px]">Mexico - <Felt /> - <Reports /> - <Facebook /></div></>, coord: ["18.91 /", "-102.37"], src: ["SSN"], newSrc: true },
  { h: H82, time: ["Tue, 10 May", "23:41:04", "UTC"], mag: ["M 4.1 /", "31.9km -"], place: <>North Pacific Ocean, 131 miles SW<br />of Unalaska, Aleutians West,<br />Alaska, USA - <Felt /></>, coord: ["52.4267 /", "-168.5786"], src: ["USGS"] },
  { h: "h-[116px]", bg: G, bold: true, time: ["Tue, 10", "May", "23:18:50", "UTC"], mag: ["M 5.4 /", "39.4km -"], place: <>South Atlantic Ocean, South<br />Georgia &amp; South Sandwich<div className="leading-[30px]">Islands - <Felt /> - <Facebook /></div></>, coord: ["-55.4239 /", "-28.1486"], src: ["USGS"] },
  { h: "h-[140px]", bg: G, bold: true, red: true, time: ["Tue, 10", "May", "23:06:29", "UTC"], mag: ["M 6.8 /", "193.8km -"], place: <>159 km WNW of Jujuy,<br />Departamento de Doctor<br />Manuel Belgrano, Jujuy,<br />Argentina - <Felt /> - <Reports /> -<div className="pl-[1px] leading-[24px]"><Facebook /></div></>, coord: ["-23.6141 /", "-66.7236"], src: ["USGS"] },
  { h: H82, time: ["Tue, 10 May", "22:09:21", "UTC"], mag: ["M 4.9 /", "33.0km -"], place: <>Otago, New Zealand - <Felt /> - <Facebook /></>, coord: ["-48.24466 /", "165.26352"], src: ["GEONET", "(NZ)"], marked: true },
  { h: H82, bg: G, time: ["Tue, 10 May", "21:19:03", "UTC"], mag: ["M 4.6 /", "147.9km -"], place: <>Russia: Kuril Islands - <Felt /> - <Facebook /></>, coord: ["48.809 /", "152.9918"], src: ["USGS"] },
  { h: H82, time: ["Tue, 10 May", "21:15:33", "UTC"], mag: ["M 4.7 /", "10.0km -"], place: <>NORTHERN XINJIANG, CHINA - [<span className="text-[#a52a2a] underline decoration-2 underline-offset-[3px]">I<br />felt it</span>]</>, coord: ["43.57 / 89.58"], src: ["KNDC"] },
  { h: H82, time: ["Tue, 10 May", "20:58:34", "UTC"], mag: ["M 4.2 /", "10.0km -"], place: <>Indian Ocean, 96 km SSW of<br />Banjar, West Java, Indonesia - [<span className="text-[#a52a2a] underline decoration-2 underline-offset-[3px]">I felt<br />it</span>]</>, coord: ["-7.92 / 106.96"], src: ["EMSC"] },
  { h: H82, time: ["Tue, 10 May", "20:16:16", "UTC"], mag: ["M 4.4 /", "10.0km -"], place: <>95 km ESE of Shanhaiguan, Hebei,<br />China - <Felt /></>, coord: ["39.5657 /", "120.705"], src: ["USGS"] },
  { h: H82, time: ["Tue, 10 May", "19:38:11", "UTC"], mag: ["M 4.0 /", "10.0km -"], place: <>22 km ENE of Kruševac, Rasina,<br />Central Serbia - <Felt /> - <Reports /> -<div className="h-6 pl-[1px] leading-[22px]"><Facebook /></div></>, coord: ["43.67 / 21.58"], src: ["GFZ"] },
  { h: H82, bg: G, time: ["Tue, 10 May", "19:22:59", "UTC"], mag: ["M 4.0 /", "10.0km -"], place: <>East Kazakhstan, 63 km SW of<br />Rubtsovsk, Altai Krai, Russia - [<span className="text-[#a52a2a] underline decoration-2 underline-offset-[3px]">I felt<br />it</span>]</>, coord: ["51.05 / 80.69"], src: ["KNDC"] },
  { h: H82, bg: G, time: ["Tue, 10 May", "18:59:33", "UTC"], mag: ["M 4.0 /", "120.0km -"], place: <>Oaxaca, 62 km SW of Acayucan,<br />Veracruz, Mexico - <Felt /></>, coord: ["17.51 / -95.28"], src: ["SSN"], newSrc: true },
  { h: "h-[116px]", bold: true, time: ["Tue, 10", "May", "18:49:20", "UTC"], mag: ["M 5.0 /", "10.0km -"], place: <></>, coord: [], src: [] },
];

const ALERT: Row = { h: H82, bg: "bg-[#f6cccc]", time: ["Wed, 11 May", "01:15:58", "UTC"], mag: ["M 4.2 /", "414.8km -"], place: <>New Zealand - <Felt /></>, coord: ["-30.75323 /", "-178.92165"], src: ["GEONET", "(NZ)"] };

function QuakeRow({ r }: { r: Row }) {
  const cell = "flex shrink-0 flex-col items-start justify-center whitespace-nowrap px-[2px] " + (r.bg || "");
  return (
    <div className={"flex shrink-0 gap-1 " + r.h + (r.bold ? " text-[24px] font-bold leading-[28px]" : " text-[22px] leading-[26px]") + (r.red ? " text-[#f03323]" : " text-black")}>
      <div className={cell + " w-[134px]"}>{r.time.map((t) => <div key={t}>{t}</div>)}</div>
      <div className={cell + " w-[126px]"}>
        {r.mag.map((t) => <div key={t}>{t}</div>)}
        <div>[<span className="text-[#0000e0] underline decoration-2 underline-offset-[3px]">info</span>]</div>
      </div>
      <div className={cell + " w-[360px]"}><div>{r.place}</div></div>
      <div className={cell + " w-[147px] text-[#0000e0] underline decoration-2 underline-offset-[3px]"}>{r.coord.map((t) => <div key={t}>{t}</div>)}</div>
      <div className={cell + " w-[115px] underline decoration-2 underline-offset-[3px] " + (r.newSrc ? "text-[#0000e0]" : "text-[#48208a]")}>
        {r.src.map((t) => <div key={t} className={r.marked ? "bg-[#d9d9d9] pr-[3px]" : ""}>{t}</div>)}
      </div>
    </div>
  );
}

function QuakeList() {
  return (
    <div className="flex h-[1446px] w-[1176px] shrink-0 flex-col overflow-hidden pl-[260px] font-['Liberation_Sans',Arial,sans-serif]">
      <div className="flex h-[46px] shrink-0 items-center text-[22px] font-bold"><Fit w={413}>List of latest earthquakes worldwide</Fit></div>
      <div className="flex h-[40px] shrink-0 items-center text-[22px] font-bold">
        <Fit w={7}>(</Fit><Fit w={319} className="italic">updated: 11 May, 00:55 UTC</Fit><Fit w={255}>) (only quakes &gt;=M1.8)</Fit>
        <span className="ml-[66px] text-[51px] leading-10 text-[#888]">X</span>
      </div>
      <div className="flex h-[52px] shrink-0 items-end pb-[3px] pl-[6px] text-[24px] italic text-[#ee6b68]"><Fit w={477}>Incoming new quake alerts (preliminary info):</Fit></div>
      <div className="flex flex-col gap-1 pl-[4px]">
        <QuakeRow r={ALERT} />
        <div className="flex h-[30px] items-center pl-[2px] text-[22px] font-bold text-[#0000d0]"><Fit w={260}>Wednesday, 11 May 2022</Fit></div>
        <div className="flex h-[30px] items-center pl-[2px] text-[22px] font-bold text-[#0000d0]"><Fit w={226}>Tuesday, 10 May 2022</Fit></div>
        {ROWS.map((r, i) => <QuakeRow key={i} r={r} />)}
      </div>
    </div>
  );
}

/* ---------- header ---------- */

const BLUE = "text-[#0000d8]";
const BB = "font-bold text-[#0000d8]";

function Header() {
  return (
    <div className="flex h-[98px] justify-between pl-[10px] font-['DejaVu_Sans',Verdana,sans-serif] text-[22px]">
      <div className="flex flex-col">
        <div className="flex h-[38px] items-center">
          <div className="-mt-[4px]"><DarkVolcano /></div>
          <span className="ml-[9px] w-[8px]">|</span>
          <div className="ml-[16px]"><Seismo /></div>
          <span className="ml-[9px] w-[8px]">|</span>
          <div className="-mt-[8px] ml-[9px]"><PinkBox /></div>
          <Fit w={975} className="ml-2 text-[24px] font-bold">Interactive Map of Active Volcanoes and recent Earthquakes world-wide</Fit>
        </div>
        <div className="flex h-[26px] items-center">
          <Fit w={209} className={BB}>Volcanoes (hide)</Fit>
          <Fit w={9} className="ml-[9px]">-</Fit>
          <VolcanoIcon fill="#7af948" className="-mt-[4px] ml-[9px]" /><Fit w={25} className={BLUE}>all</Fit>
          <Fit w={9} className="ml-[8px]">-</Fit>
          <VolcanoIcon fill="#fbfb55" plume="#fbfb55" className="-mt-[4px] ml-[8px]" /><Fit w={81} className={BB}>unrest</Fit>
          <Fit w={9} className="ml-[8px]">-</Fit>
          <VolcanoIcon fill="#ee9a38" plume="#ee9a38" className="-mt-[4px] ml-[8px]" /><Fit w={249} className={BLUE}>warning/minor activity</Fit>
          <Fit w={9} className="ml-[8px]">-</Fit>
          <VolcanoIcon fill="#eb3323" plume="#eb3323" className="-mt-[4px] ml-[8px]" /><Fit w={93} className={BLUE}>eruption</Fit>
          <Fit w={9} className="ml-[8px]">|</Fit>
          <Fit w={68} className={"ml-[8px] " + BB}>News</Fit>
        </div>
        <div className="flex h-[30px] items-center">
          <Fit w={175} className={BB}>Quakes (hide)</Fit>
          <Fit w={25} className={"ml-[8px] " + BLUE}>all</Fit>
          <Fit w={50} className={"ml-[9px] " + BLUE}>&gt;M3</Fit>
          <Fit w={55} className={"ml-[8px] " + BB}>&gt;M4</Fit>
          <Fit w={50} className={"ml-[8px] " + BLUE}>&gt;M5</Fit>
          <Fit w={50} className={"ml-[8px] " + BLUE}>&gt;M6</Fit>
          <Fit w={50} className={"ml-[8px] " + BLUE}>M7+</Fit>
          <Fit w={10} className="ml-[7px]">/</Fit>
          <Fit w={108} className="ml-[8px] font-bold text-[#ea3323]">past 24h</Fit>
          <Fit w={9} className="ml-[8px]">-</Fit>
          <Fit w={97} className="ml-[8px] text-[#ee8f3c]">past 48h</Fit>
          <Fit w={9} className="ml-[8px]">-</Fit>
          <Fit w={113} className="ml-[8px] text-[#a5a636]">past week</Fit>
          <Fit w={9} className="ml-[8px]">-</Fit>
          <Fit w={146} className="ml-[8px] text-[#cccb6c]">past 2 weeks</Fit>
          <Fit w={10} className="ml-[7px]">/</Fit>
          <Fit w={83} className={"ml-[8px] " + BLUE}>Archive</Fit>
          <Fit w={9} className="ml-[7px]">|</Fit>
          <Fit w={45} className={"ml-[9px] " + BB}>List</Fit>
          <div className="ml-[10px] flex h-[30px] w-[536px] items-center justify-between border-2 border-[#ebebeb] pl-[9px] pr-[6px] font-['Liberation_Sans',Arial,sans-serif] text-[20px]">
            <Fit w={46} className="text-[19px]">World</Fit>
            <svg viewBox="0 0 18 12" className="h-3 w-[18px]"><path d="M1.500 1.500L9 9.500 16.500 1.500" fill="none" stroke="#111" strokeWidth="2" /></svg>
          </div>
        </div>
      </div>
      <div className="flex w-[310px] flex-col items-end pr-2">
        <div className="flex h-[56px] items-start pt-[4px]">
          <div className="mr-[22px] mt-1 flex h-8 w-[105px] items-center justify-center rounded-full border-2 border-[#f0a050] bg-gradient-to-b from-[#fff3d0] via-[#fbd68c] to-[#f4a737] font-['Liberation_Sans',Arial,sans-serif] text-[18px] font-bold italic text-[#1d3a6c]">Donate</div>
          <Magnifier />
        </div>
        <div className="mr-[19px] flex h-[32px] items-center text-[18px] text-[#666]"><Fit w={274}>Wed, 11 May 2022 01:23 UTC</Fit></div>
      </div>
    </div>
  );
}

function NewsBar() {
  return (
    <div className="ml-[10px] flex h-[43px] w-[2980px] items-center bg-[#cccccc] pl-[5px] font-['DejaVu_Sans',Verdana,sans-serif] text-[22px] font-bold text-[#aa3030]">
      <Fit w={76} className="mt-1">News:</Fit>
      <div className="relative ml-[15px] h-[43px] w-[1200px] font-normal">
        <div className="absolute left-0 top-[9px] font-['Liberation_Serif',serif] text-[32px] leading-[34px] text-black"><Fit w={151}>Latest news</Fit></div>
        <div className="absolute left-[1px] top-[4px] font-['Liberation_Sans',Arial,sans-serif] text-[26px] leading-[34px]"><Fit w={1167}>Rincón de la Vieja volcano (Costa Rica): phreatic eruptions, earthquakes, low crater lake levels, slight</Fit></div>
      </div>
      <Fit w={16} className="ml-[19px] mt-1">x</Fit>
    </div>
  );
}

/* ---------- map panel ---------- */

const BTN = "flex h-[60px] items-center justify-center rounded-[5px] border-2 border-[#999] bg-[#eaeaea] ";

function MapPanel() {
  return (
    <div className="flex h-[1456px] w-[1774px] shrink-0 flex-col bg-[#dddddd] font-['Liberation_Sans',Arial,sans-serif]">
      <div className="flex h-[216px] items-start pl-5 pt-5 text-[26px] text-[#444]">
        <div className={BTN + "w-[110px]"}><Fit w={82}>Terrain</Fit></div>
        <div className="ml-[19px] flex h-[60px] w-[124px] items-center justify-center rounded-[2px] border-4 border-b-[#555] border-l-[#999] border-r-[#555] border-t-[#999] bg-[#f5f5f5]"><Fit w={95}>Satellite</Fit></div>
        <div className={BTN + "ml-[19px] w-[106px]"}><Fit w={77}>Hybrid</Fit></div>
        <div className={BTN + "ml-[19px] w-[114px]"}><Fit w={85}>Streets</Fit></div>
        <div className={BTN + "ml-[19px] w-[102px]"}><Fit w={74}>Plates</Fit></div>
      </div>
      <WorldMap />
      <div className="flex h-[216px] justify-between">
        <div className="ml-[10px] mt-[142px] flex flex-col items-start text-[22px] leading-[26px] text-[#333]">
          <div className="h-[34px] w-[128px] border-4 border-t-0 border-[#777] bg-[#ececec] pl-[10px] pt-[3px]"><Fit w={85}>5000 km</Fit></div>
          <div className="h-[30px] w-[124px] border-x-4 border-[#777] bg-[#ececec] pl-[10px] pt-[3px]"><Fit w={79}>3000 mi</Fit></div>
        </div>
        <div className="flex flex-col items-end">
          <div className="mr-5 mt-[33px] flex h-[130px] w-[68px] flex-col rounded-[9px] border-4 border-[#b2b2b2] bg-white">
            <div className="flex h-[61px] items-center justify-center border-b-2 border-[#ccc]">
              <svg viewBox="0 0 24 24" className="h-6 w-6"><path d="M12 0v24M0 12h24" stroke="#000" strokeWidth="4.500" /></svg>
            </div>
            <div className="flex h-[61px] items-center justify-center pt-2">
              <svg viewBox="0 0 24 24" className="h-6 w-6"><path d="M0 12h24" stroke="#000" strokeWidth="4.500" /></svg>
            </div>
          </div>
          <div className="mt-5 flex h-[33px] w-[365px] items-center justify-center bg-[#f5f5f5] text-[22px] text-[#333]">
            <Fit w={66} className="text-[#2c76a8]">Leaflet</Fit><Fit w={279}> | Map data: © Google Maps</Fit>
          </div>
        </div>
      </div>
    </div>
  );
}

const LINK = "underline decoration-2 underline-offset-[3px] ";

function Footer() {
  return (
    <div className="flex h-[28px] items-center justify-end pr-[9px] font-['DejaVu_Sans',Verdana,sans-serif] text-[20px] text-[#999]">
      <Fit w={165}>88.566 / 85.781</Fit>
      <Fit w={8} className="ml-[8px]">|</Fit>
      <Fit w={39} className={LINK + "ml-[8px] text-[#0000e0]"}>App</Fit>
      <Fit w={8} className="ml-[8px]">|</Fit>
      <Fit w={38} className={LINK + "ml-[8px] text-[#0000e0]"}>IOS</Fit>
      <Fit w={8} className="ml-[8px]">|</Fit>
      <Fit w={73} className={LINK + "ml-[7px] text-[#0000e0]"}>Legend</Fit>
      <Fit w={8} className="ml-[8px]">|</Fit>
      <Fit w={179} className={LINK + "ml-[8px] text-[#0000e0]"}>Volcano Webcams</Fit>
      <Fit w={8} className="ml-[7px]">|</Fit>
      <Fit w={180} className={LINK + "ml-[8px] font-bold text-[#a52a2a]"}>Get this widget!</Fit>
      <Fit w={225} className="ml-[8px]">- (c) VolcanoDiscovery</Fit>
    </div>
  );
}

export default function App() {
  return (
    <div className="flex h-[1660px] w-[3004px] flex-col overflow-hidden bg-white">
      <div className="h-1 shrink-0 border-b-2 border-[#3a3a3a] bg-[#111]" />
      <div className="ml-1 mt-[10px] flex h-[1646px] shrink-0 flex-col border-y-2 border-l-2 border-[#aa3030]">
        <Header />
        <NewsBar />
        <div className="mt-[15px] flex h-[1456px] shrink-0">
          <QuakeList />
          <div className="flex h-[1446px] w-[30px] shrink-0 flex-col items-center border-x-2 border-[#ebebeb] bg-[#fafafa] pt-[6px]">
            <div className="h-[496px] w-4 rounded-full bg-[#c1c1c1]" />
          </div>
          <div className="w-[10px] shrink-0" />
          <MapPanel />
        </div>
        <Footer />
      </div>
    </div>
  );
}
